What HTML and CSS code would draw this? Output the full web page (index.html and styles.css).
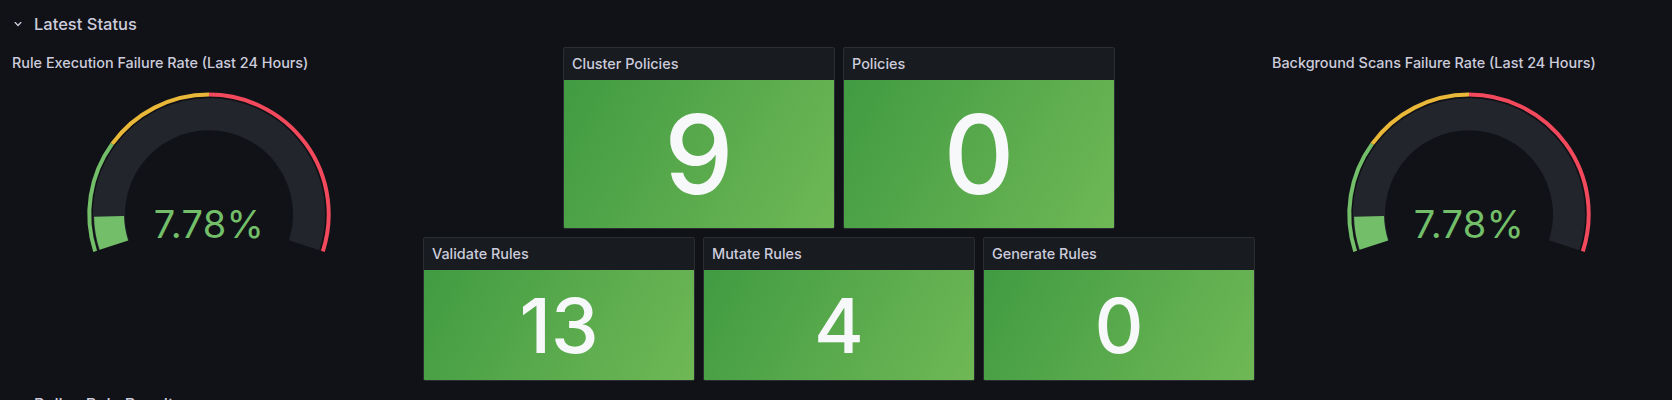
FILE: index.html
```html
<!DOCTYPE html>
<html lang="en">
<head>
<meta charset="utf-8">
<title>Latest Status</title>
<link rel="stylesheet" href="styles.css">
</head>
<body>
<main class="dashboard">
  <div class="row-header row-latest">
    <svg class="chev" viewBox="0 0 24 24" aria-hidden="true"><path d="M17,9.17a1,1,0,0,0-1.41,0L12,12.71,8.46,9.17a1,1,0,0,0-1.41,0,1,1,0,0,0,0,1.42l4.24,4.24a1,1,0,0,0,1.42,0L17,10.59A1,1,0,0,0,17,9.17Z"/></svg>
    <span class="row-text">Latest Status</span>
  </div>

  <section class="gauge-panel g-left">
    <header class="gauge-title">Rule Execution Failure Rate (Last 24 Hours)</header>
    <svg class="gauge" viewBox="0 0 412 302" width="412" height="302">
      <path class="band" d="M110.89 166.20 A100 100 0 1 1 301.11 166.20"/>
      <path class="bar" d="M110.89 166.20 A100 100 0 0 1 106.02 137.39"/>
      <path class="th th-green" d="M92.16 172.29 A119.7 119.7 0 0 1 109.16 64.94"/>
      <path class="th th-yellow" d="M109.16 64.94 A119.7 119.7 0 0 1 206 15.6"/>
      <path class="th th-red" d="M206 15.6 A119.7 119.7 0 0 1 319.84 172.29"/>
      <text class="gauge-value" x="206" y="159.3" text-anchor="middle">7.78%</text>
    </svg>
  </section>

  <section class="stat s-cluster">
    <header class="stat-head">Cluster Policies</header>
    <div class="stat-body big">9</div>
  </section>
  <section class="stat s-policies">
    <header class="stat-head">Policies</header>
    <div class="stat-body big">0</div>
  </section>

  <section class="stat s-validate">
    <header class="stat-head">Validate Rules</header>
    <div class="stat-body small">13</div>
  </section>
  <section class="stat s-mutate">
    <header class="stat-head">Mutate Rules</header>
    <div class="stat-body small">4</div>
  </section>
  <section class="stat s-generate">
    <header class="stat-head">Generate Rules</header>
    <div class="stat-body small">0</div>
  </section>

  <section class="gauge-panel g-right">
    <header class="gauge-title">Background Scans Failure Rate (Last 24 Hours)</header>
    <svg class="gauge" viewBox="0 0 412 302" width="412" height="302">
      <path class="band" d="M110.89 166.20 A100 100 0 1 1 301.11 166.20"/>
      <path class="bar" d="M110.89 166.20 A100 100 0 0 1 106.02 137.39"/>
      <path class="th th-green" d="M92.16 172.29 A119.7 119.7 0 0 1 109.16 64.94"/>
      <path class="th th-yellow" d="M109.16 64.94 A119.7 119.7 0 0 1 206 15.6"/>
      <path class="th th-red" d="M206 15.6 A119.7 119.7 0 0 1 319.84 172.29"/>
      <text class="gauge-value" x="206" y="159.3" text-anchor="middle">7.78%</text>
    </svg>
  </section>

  <div class="row-header row-next">
    <svg class="chev chev-right" viewBox="0 0 24 24" aria-hidden="true"><path d="M17,9.17a1,1,0,0,0-1.41,0L12,12.71,8.46,9.17a1,1,0,0,0-1.41,0,1,1,0,0,0,0,1.42l4.24,4.24a1,1,0,0,0,1.42,0L17,10.59A1,1,0,0,0,17,9.17Z"/></svg>
    <span class="row-text">Policy Rule Results</span>
  </div>
</main>
</body>
</html>
```

FILE: styles.css
```css
html, body {
  margin: 0;
  padding: 0;
  background: #111217;
  overflow: hidden;
}

body {
  font-family: Inter, "Noto Sans", "Liberation Sans", sans-serif;
  color: #ccccdc;
}

.dashboard {
  display: grid;
  grid-template-columns: repeat(24, 62px);
  grid-auto-rows: 30px;
  gap: 8px;
  padding-top: 9px;
  margin-left: 3px;
  width: 1672px;
}

/* row headers */
.row-header {
  grid-column: 1 / 25;
  display: flex;
  align-items: center;
  gap: 8px;
  padding-left: 7px;
  font-size: 16.5px;
  font-weight: 500;
  color: #ccccdc;
}
.row-latest { grid-row: 1; }
.row-next { grid-row: 11; }

.chev {
  width: 16px;
  height: 16px;
  fill: #ccccdc;
  flex: none;
}
.chev-right { transform: rotate(-90deg); }

/* gauge panels */
.gauge-panel {
  display: flex;
  flex-direction: column;
  grid-row: 2 / span 9;
}
.g-left { grid-column: 1 / 7; }
.g-right { grid-column: 19 / 25; }

.gauge-title {
  height: 32px;
  flex: none;
  display: flex;
  align-items: center;
  padding-left: 9px;
  padding-bottom: 2px;
  box-sizing: border-box;
  font-size: 14.4px;
  font-weight: 500;
  color: #ccccdc;
  white-space: nowrap;
}

.gauge {
  display: block;
  flex: none;
}
.gauge .band {
  fill: none;
  stroke: #22252b;
  stroke-width: 32;
}
.gauge .bar {
  fill: none;
  stroke: #73bf69;
  stroke-width: 30;
}
.gauge .th {
  fill: none;
  stroke-width: 4;
}
.gauge .th-green { stroke: #73bf69; }
.gauge .th-yellow { stroke: #eab839; }
.gauge .th-red { stroke: #f2495c; }
.gauge-value {
  font-family: Inter, "Noto Sans", sans-serif;
  font-size: 38px;
  font-weight: 400;
  letter-spacing: 0.3px;
  fill: #73bf69;
}

/* stat panels */
.stat {
  display: flex;
  flex-direction: column;
  background: #181b1f;
  border: 1px solid #2a2d32;
  border-radius: 2px;
  overflow: hidden;
}
.s-cluster  { grid-column: 9 / 13;  grid-row: 2 / span 5; }
.s-policies { grid-column: 13 / 17; grid-row: 2 / span 5; }
.s-validate { grid-column: 7 / 11;  grid-row: 7 / span 4; }
.s-mutate   { grid-column: 11 / 15; grid-row: 7 / span 4; }
.s-generate { grid-column: 15 / 19; grid-row: 7 / span 4; }

.stat-head {
  height: 32px;
  flex: none;
  display: flex;
  align-items: center;
  padding-left: 8px;
  padding-bottom: 2px;
  box-sizing: border-box;
  font-size: 14.4px;
  font-weight: 500;
  color: #ccccdc;
}

.stat-body {
  flex: 1;
  display: flex;
  align-items: center;
  justify-content: center;
  background: linear-gradient(120deg, #419b42, #6fb856);
  color: #f7f8fa;
  font-weight: 500;
  line-height: normal;
}
.stat-body.big { font-size: 110px; }
.stat-body.small { font-size: 76px; }
```
